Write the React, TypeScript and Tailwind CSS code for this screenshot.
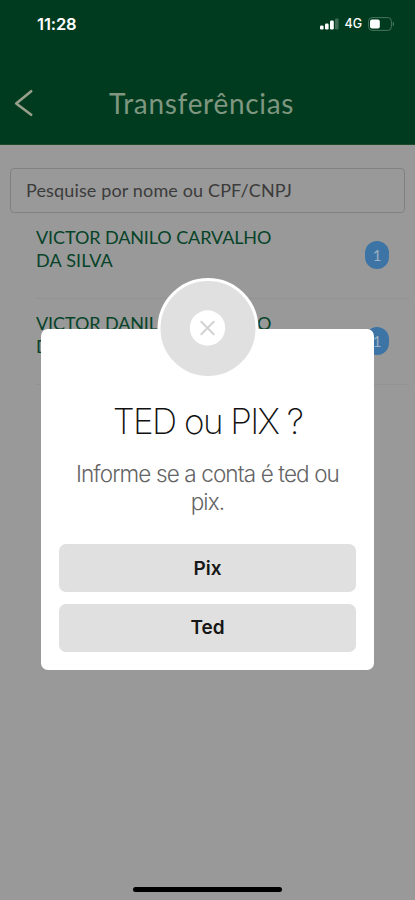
const rounded = "font-['Lato','Open_Sans',sans-serif]";

function StatusBar() {
  return (
    <div className="flex h-[48px] items-center pl-[37px] pr-[20px] text-white">
      <span className="text-[16.5px] font-semibold leading-none tracking-[-0.1px]">11:28</span>
      <div className="ml-auto flex items-center">
        <svg width="19" height="12" viewBox="0 0 19 12" fill="#fff">
          <rect x="0" y="7.5" width="3.6" height="4" rx="1.2" />
          <rect x="5" y="5.5" width="3.6" height="6" rx="1.2" />
          <rect x="10" y="2.5" width="3.8" height="9" rx="1.2" />
          <rect x="15" y="0.5" width="3.6" height="11" rx="1.2" opacity="0.25" />
        </svg>
        <span className="ml-[5px] text-[12.5px] font-medium leading-none">4G</span>
        <svg className="ml-[6px]" width="27" height="14" viewBox="0 0 27 14">
          <rect x="0.6" y="0.6" width="22.8" height="12.8" rx="3.5" fill="none" stroke="#47735a" strokeWidth="1" />
          <rect x="2" y="2.5" width="9.8" height="9" rx="2" fill="#fff" />
          <path d="M24.8 4.5q2.2 2.5 0 5z" fill="#60866f" />
        </svg>
      </div>
    </div>
  );
}

function Contact() {
  return (
    <div className="ml-[36px] mr-[6px] flex h-[86px] border-b border-[#939393] pr-[20px]">
      <p className={`${rounded} w-[260px] pt-[13px] text-[18px] leading-[22.5px] tracking-[-0.1px] text-[#064328]`}>
        VICTOR DANILO CARVALHO
        <br />
        <span className="tracking-[0.2px]">DA SILVA</span>
      </p>
      <span className={`${rounded} ml-auto mt-[28px] flex h-[28px] w-[24px] items-center justify-center rounded-full bg-[#3c74a5] text-[15px] text-[#9fb0c0]`}>
        1
      </span>
    </div>
  );
}

export default function App() {
  return (
    <div className="relative flex h-[900px] w-[415px] flex-col overflow-hidden bg-[#999999] font-['Inter','Liberation_Sans',sans-serif]">
      <header className="h-[145px] shrink-0 border-b border-[#1d4a28] bg-[#003b1f]">
        <StatusBar />
        <div className="flex h-[110px] items-center pl-[14px]">
          <svg width="20" height="28" viewBox="0 0 20 28" fill="none" stroke="#98a08c" strokeWidth="2.6" strokeLinecap="round" strokeLinejoin="round">
            <path d="M17.2 2.2 2.2 14.5 17.2 25.8" />
          </svg>
          <h1 className={`${rounded} -mt-[1px] ml-[75px] text-[28px] leading-none tracking-[0.7px] text-[#7f9680]`}>Transferências</h1>
        </div>
      </header>
      <main className="flex grow flex-col pt-[23px]">
        <div className="mx-[10px] flex h-[45px] items-center rounded-[4px] border border-[#818181] pl-[15px]">
          <span className={`${rounded} text-[18px] tracking-[0.14px] text-[#3b3b3b]`}>Pesquise por nome ou CPF/CNPJ</span>
        </div>
        <Contact />
        <Contact />
      </main>
      <div className="mb-[8px] ml-[133px] h-[5px] w-[149px] rounded-full bg-black" />

      <div className="absolute left-[41px] top-[328.5px] flex h-[341px] w-[333px] flex-col rounded-[7px] bg-white px-[18px] text-center">
        <div className="-mt-[51px] flex h-[101px] w-[101px] shrink-0 translate-x-[0.5px] items-center justify-center self-center rounded-full border-[3.5px] border-white bg-[#e0e0e0]">
          <svg className="-mt-[1px] -ml-[1px]" width="36" height="36" viewBox="0 0 36 36">
            <circle cx="18" cy="18" r="17.7" fill="#fff" />
            <path d="m11.8 11.8 12.4 12.4m0-12.4-12.4 12.4" stroke="#d2d2d2" strokeWidth="2" strokeLinecap="round" />
          </svg>
        </div>
        <h2 className="mt-[21px] text-[35px] font-extralight leading-[42px] tracking-[-1.55px] text-[#111]">TED ou PIX ?</h2>
        <p className="mt-[18px] text-[22.5px] font-light leading-[28px] tracking-[-0.88px] text-[#646464]">
          Informe se a conta é ted ou
          <br />
          pix.
        </p>
        <button className="mt-[28.5px] h-[48px] shrink-0 rounded-[7px] bg-[#e0e0e0] pt-[2px] text-[19px] font-semibold text-[#171717]">Pix</button>
        <button className="mt-[11.5px] h-[48px] shrink-0 rounded-[7px] bg-[#e0e0e0] pt-[2px] text-[19px] font-semibold text-[#171717]">Ted</button>
      </div>
    </div>
  );
}
